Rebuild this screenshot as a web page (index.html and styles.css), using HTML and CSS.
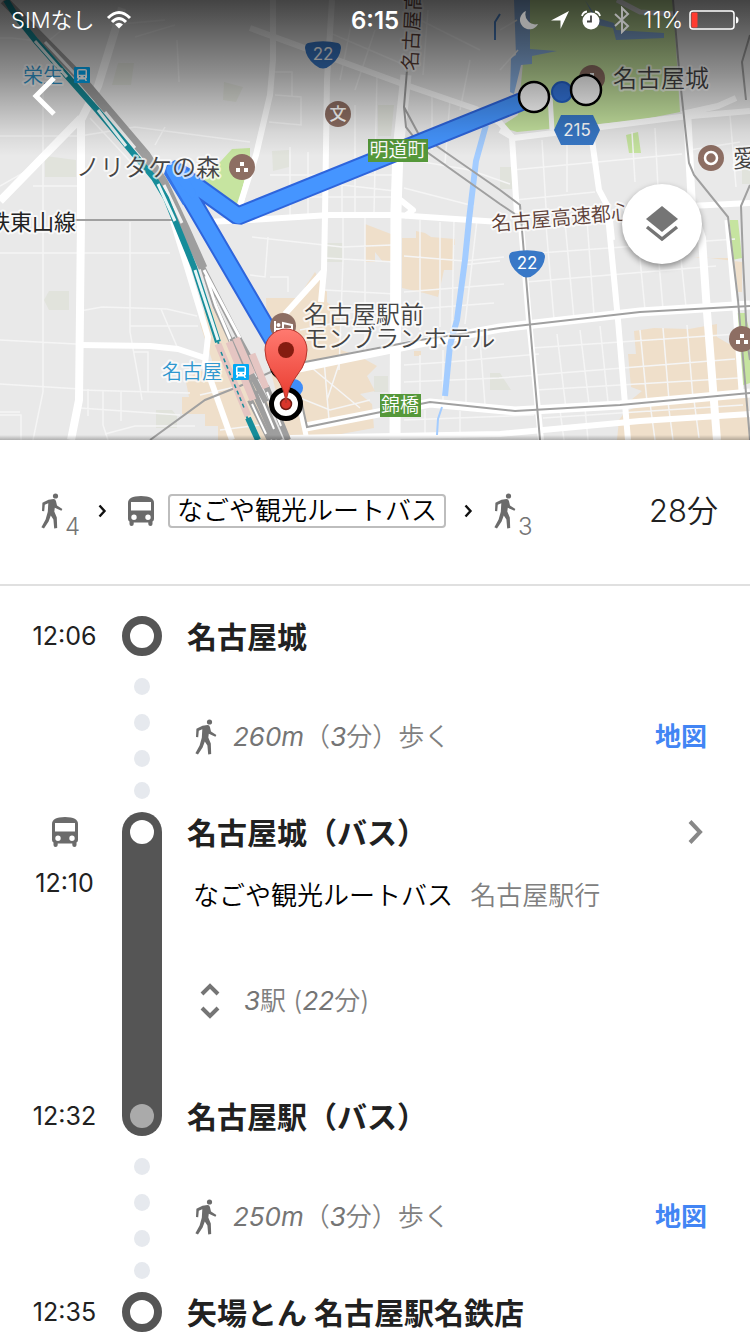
FILE: index.html
```
<!DOCTYPE html>
<html lang="ja">
<head>
  <meta charset="utf-8">
  <meta name="viewport" content="width=device-width, initial-scale=1.0">
  <title>名古屋城 - 矢場とん 名古屋駅名鉄店</title>
  <link rel="stylesheet" href="styles.css">
</head>
<body>
  <svg class="defs" width="0" height="0" aria-hidden="true">
    <symbol id="walk" viewBox="0 0 26 38">
      <circle cx="16.500" cy="4" r="2.600"/>
      <path d="M9.500 7.800 L14.500 7 Q16.600 7 17 9.200 L18 13.600 L23.400 17 L22.400 18.800 L15.800 15.800 L15.300 19.600 L17.800 25.400 L18.200 36 L15.200 36.400 L14.400 27.400 L11.800 23.600 L9.600 29.600 L5 36.600 L2.400 35.200 L6.600 27.600 L8.800 19.800 L9.300 11.200 L5.800 12.800 L5.200 19.200 L3 19 L3.400 10.800 Z"/>
    </symbol>
    <symbol id="bus" viewBox="0 0 30 32">
      <path fill-rule="evenodd" d="M2 8 Q2 1 15 1 Q28 1 28 8 V24 Q28 25.500 26.500 26.500 V29 Q26.500 31 24.500 31 Q22.300 31 22.300 29 V27.500 H7.700 V29 Q7.700 31 5.500 31 Q3.500 31 3.500 29 V26.500 Q2 25.500 2 24 Z M5 7 V15.500 H25 V7 Z M8 19.500 A2.700 2.700 0 1 0 8 24.900 A2.700 2.700 0 1 0 8 19.500 Z M22 19.500 A2.700 2.700 0 1 0 22 24.900 A2.700 2.700 0 1 0 22 19.500 Z"/>
    </symbol>
    <symbol id="next" viewBox="0 0 10 16">
      <path d="M1.500 2.500 L6.500 8 L1.500 13.500" fill="none" stroke="#111" stroke-width="2.400"/>
    </symbol>
    <symbol id="dots" viewBox="0 0 40 156">
      <g fill="#e6e9ee">
        <ellipse cx="20" cy="30.500" rx="8" ry="8.500"/>
        <ellipse cx="20" cy="66.500" rx="8" ry="8.500"/>
        <ellipse cx="20" cy="102.500" rx="8" ry="8.500"/>
        <ellipse cx="20" cy="134.500" rx="8" ry="8.500"/>
      </g>
    </symbol>
    <symbol id="station" viewBox="0 0 16 16">
      <rect width="16" height="16" rx="1" fill="#03a9f4"/>
      <path fill="#fff" fill-rule="evenodd" d="M3 3.500 Q3 2 5 2 H11 Q13 2 13 3.500 V10.500 Q13 11.500 12 11.500 L13 14 H11.500 L10.800 12.600 H5.200 L4.500 14 H3 L4 11.500 Q3 11.500 3 10.500 Z M4.500 3.600 V7.800 H11.500 V3.600 Z M5 9 V10.300 H6.400 V9 Z M9.600 9 V10.300 H11 V9 Z"/>
    </symbol>
    <symbol id="shield" viewBox="0 0 36 28">
      <path fill="#3878c7" d="M3 2 Q18 -1.500 33 2 Q36 3 36 7 Q35 17 26 24 Q18 31 10 24 Q1 17 0 7 Q0 3 3 2 Z"/>
    </symbol>
    <symbol id="sight" viewBox="0 0 26 26">
      <circle cx="13" cy="13" r="13" fill="#8d6e63"/>
      <path fill="#fff" d="M11 8h4v4h-4zM7 14h4v4H7zM15 14h4v4h-4z"/>
    </symbol>
  </svg>

  <header class="map">
    <svg class="map-canvas" viewBox="0 0 750 440" preserveAspectRatio="xMidYMid slice" role="img" aria-label="ルートの地図">
      <defs>
        <linearGradient id="shade" x1="0" y1="0" x2="0" y2="1">
          <stop offset="0" stop-color="#000" stop-opacity="0.710"/>
          <stop offset="0.470" stop-color="#000" stop-opacity="0.390"/>
          <stop offset="0.850" stop-color="#000" stop-opacity="0.080"/>
          <stop offset="1" stop-color="#000" stop-opacity="0"/>
        </linearGradient>
        <linearGradient id="pin" x1="0" y1="0" x2="0" y2="1">
          <stop offset="0" stop-color="#ff7a70"/>
          <stop offset="1" stop-color="#e8392d"/>
        </linearGradient>
      </defs>
      <rect width="750" height="440" fill="#e9e9e9"/>

      <!-- blocks -->
      <g fill="#e1e3dc">
        <path d="M118 63h16l-3 22h-19zM45 156l31 4v17H45zM224 82l19 5-7 15-13-2zM49 291h20v19H49l-5-10zM156 410h16l5 6v12h-21zM327 243h16v19h-16zM378 105h16l-3 31h-13zM272 151l17-1v17l-16 4zM374 376h14v16h-14zM490 373h10l11 17h-21zM500 167h12v22h-12zM742 168h8v16h-8z"/>
      </g>
      <g fill="#efdfca">
        <path d="M365 224l13 5 13 5v28h-8l-8-10v10h-10zM402 238h14v-7l9 2 6 4 24 2v6h-1v25h-10l-6 27-14-4-22-5zM414 351h7v5h-7z"/>
        <path d="M208 301l11 18 15 26 20 40 16 20-2 35h-50v-14h-13v-12h-23v-17h7l-3-15 12-12 12 4 2-14-12-36zM266 298h36l3-11 10-15 12 20v10l13 12 1 36 18 6 18 10-10 10 8 15-15 3 12 10 2 24-66 12h-20l-20-80z"/>
        <path d="M634 331l20-3 35 1 28-5v13l12 7 8-7 2 56-108 7 11-9-11-4-3-33h8zM625 412l13-6 110-11 2 45H617l2-20zM694 258l8-1 40 5v30h-4l-4-34z"/>
      </g>
      <g fill="#c6e4a0">
        <path d="M529 0h144l7 112-40 8-123 12-17-5 18-12zM232 149l18-1v20l-12 38-38-22zM626 135l12-3 3 21h-12zM729 220h9l4 38-10 2zM735 313h10l5 20v50l-9 3-4-36z"/>
      </g>
      <g fill="#8eb6e8">
        <path d="M514 0h16v49l27 2-25 5v8l-11 1-7 29-4-2 1-34 5-3zM585 0l12 18 17 5 2 7 48 3v5l-48 2-3-12-15-3z"/>
      </g>

      <!-- minor streets -->
      <g fill="none" stroke="#f5f5f5" stroke-width="1.500">
        <path d="M0 38h12l35 4 22-18M0 136h80M43 92v130M0 186l30-17 3-4M33 186h45M90 118l50 54M80 136l55-9 115 15M80 253h90M0 253h77M43 222v170l-10 48M130 222v110l10 55 2 13M80 311l22-4 65 2 30 7M130 326h68M161 309l17 40M133 352h15v40M80 390l110 3M80 408l100 7M0 340l76 4M0 384l80 5M21 440v-25H0M103 390v35l5 15M121 391v30M88 389v27M0 412h20M105 434l30-8h60M177 40l2 42M175 25l-40 12M165 127l-10 18M110 25l55-5"/>
        <path d="M275 95l26 2v28l-32-3M275 72h17v25M290 147v70M308 152v62M330 33l70 30M352 20l-12 60M375 30l-20 60M325 183l70 8M270 175h124M272 197h122M355 105v108M377 75l-3 138M342 183v31M252 237l90 10 50-2M343 215v45l-4 110M365 215v135M325 258l70 4M250 275l15 2 3-40M270 277h18v15M325 290l70 4M330 312h64M404 256l60 5 40-4M420 220v110M440 222v105M454 218l-2 110M477 220l-12 104M404 292l100-8M404 310l90-7M462 265l38-4"/>
        <path d="M404 365l45-3 90-8M404 382l95-4 39-3M420 355v48M443 350v50M466 346v60M480 340l5 65M404 420l130-5M425 410v28M460 411v27M400 158l70 12 40 14M432 95v55M450 100l-5 63M404 188l70 18M420 20l60 30M470 60l-10 50M428 10l-5 65M300 358l60 50M280 390l50 20 40-10M324 360l5 60M342 355l-15 45M300 330l60-12M190 370l30-4M200 395l35-8M220 430l40-5"/>
        <path d="M542 140l4 68M567 137v55M632 132l3 50M655 128l3 60M730 115l6 72M512 170l170-16M515 200l80-8M690 150l50-8M525 254l210-15M526 282l190-16M546 225l8 95M565 222l9 97M587 220l7 95M636 218l9 92M659 263l4 46M681 259l5 48M532 348l205-14M535 375l200-16M536 390l202-12M557 334l9 75M580 330l9 74M600 326l8 76M640 330l7 72M663 328l6 72M687 325l6 74M543 418l200-13M560 410l4 30M585 408l3 32M650 403l5 37M668 402l5 38M694 400l5 38M500 70l18-20M500 30l17-10"/>
      </g>

      <!-- main roads -->
      <g fill="none" stroke="#fff" stroke-linejoin="round">
        <path d="M122 8L98 86 81 120v100l-2 180-8 40M81 118L0 201" stroke-width="8"/>
        <path d="M80 345l70 1 28 3 27 9M172 218l28 92 8 27-3 27 27 76" stroke-width="6"/>
        <path d="M273 0v60l-3 35-14 60-18 56M332 0l-5 80-2 135-1 55-3 32M323 272l-38 42M250 28l150 55 76 26 24 14 13 15" stroke-width="6"/>
        <path d="M406 75l-8 75-2 60-1 230" stroke-width="11"/>
        <path d="M205 222l45-2 80-5h66l104 7M404 217l9-7-15-12M690 206l60-3M736 98l-18 8-36 8" stroke-width="6"/>
        <path d="M284 371l136-28 80-15 140-16 110-7M306 427l124-24 85 8 105-6 130-12" stroke-width="9"/>
        <path d="M290 438l210-4 140-13 110-7" stroke-width="6"/>
        <path d="M500 130l14 8 166-21 70-6M512 138l5 75M521 225l8 95 12 120M592 140l7 50 8 15 11 115 10 120M610 220l2 20" stroke-width="6"/>
        <path d="M687 110l5 98 10 30 5 74 10 128" stroke-width="8"/>
        <path d="M727 220l8 90 6 80M550 95l2 35M617 0l23 12 35 2M295 385l12 55M250 168l-12 48" stroke-width="5"/>
      </g>
      <g fill="none" stroke="#a3ccff">
        <path d="M486 125l-10 36-7 59-4 40-8 60-7 25-5 51" stroke-width="6"/>
        <path d="M442 407l-4 12-1 16" stroke-width="2"/>
      </g>
      <path d="M495 40v-18l5-8" fill="none" stroke="#4d86cc" stroke-width="2"/>
      <g fill="none" stroke="#a0a0a0" stroke-width="2">
        <path d="M407 70l-3 37 2 20 18 23 76 54 15 10M404 107l14 26 20 14 62 43 20 15 2 25 8 95 10 115"/>
        <path d="M673 0l7 80 9 83 5 12 34 42 10 83 12 140M750 35l-8 27 4 38M750 185l-9 21 2 54 4 80 3 20"/>
        <path d="M150 440l55-40 35-14 44-20 136-26 80-12 140-16 110-6M300 395l7 32 123-25 85 9 105-6 130-12"/>
        <path d="M72 220h100"/>
      </g>

      <!-- railway -->
      <g fill="none">
        <path d="M4 0l74 75 68 80 18 28 21 45 18 40" stroke="#9e9e9e" stroke-width="9"/>
        <path d="M45 42l30 32M105 112l30 36M164 185l18 38" stroke="#f0f0f0" stroke-width="3"/>
        <path d="M202 266l38 74 24 44M203 268l12 38 20 44 40 90" stroke="#9e9e9e" stroke-width="5"/>
        <path d="M204 270l36 68M206 276l10 30 17 40" stroke="#fff" stroke-width="3"/>
        <path d="M6 0l10 16 20 25 62 70 56 67 12 20 10 25 18 44 24 75" stroke="#168d9a" stroke-width="6"/>
        <path d="M35 41l32 36M98 110l28 36M158 184l17 37M195 270l23 70" stroke="#e8f6f6" stroke-width="3"/>
        <path d="M218 342l30 78" stroke="#168d9a" stroke-width="2"/>
        <path d="M248 418l10 22" stroke="#168d9a" stroke-width="6"/>
        <path d="M250 400l20 40M258 390l22 50M266 386l22 54" stroke="#9e9e9e" stroke-width="6"/>
        <path d="M252 404l14 30M259 393l15 36M267 392l14 34" stroke="#fff" stroke-width="2"/>
        <path d="M232 338l34 64" stroke="#9e9e9e" stroke-width="6"/>
        <path d="M218 344l30 72M229 342l24 58M236 338l16 36M252 354l14 34" stroke="#e5c5c2" stroke-width="7"/>
        <path d="M221 352l24 58" stroke="#168d9a" stroke-width="1.500" stroke-dasharray="4 3"/>
      </g>

      <!-- route -->
      <path d="M533 97L238 216 174 170 285 360" fill="none" stroke="#2e65dc" stroke-width="19" stroke-linejoin="bevel"/>
      <path d="M164 174l3-9 8-5 16 9 8 34-16 2z" fill="#3474e8"/>
      <path d="M533 97L238 216 174 170 285 360" fill="none" stroke="#4595ff" stroke-width="15" stroke-linejoin="round"/>
      <path d="M168 170l14-2 14 24-3 8z" fill="#4595ff"/>
      <circle cx="294" cy="388" r="9" fill="#3f8df9"/>
      <circle cx="562" cy="92" r="10" fill="#3577e0" stroke="#2461c9" stroke-width="2"/>

      <!-- places -->
      <g class="label">
        <text class="station-name" x="23" y="83">栄生</text>
        <text class="station-name" x="162" y="379">名古屋</text>
        <text class="place" x="76" y="176">ノリタケの森</text>
        <text class="place" x="613" y="87">名古屋城</text>
        <text class="place" x="733" y="167">愛</text>
        <text class="place" x="304" y="323">名古屋駅前</text>
        <text class="place" x="304" y="347">モンブランホテル</text>
        <text class="line-name" x="-12" y="230">鉄東山線</text>
        <text class="road-name" transform="translate(492 231) rotate(-5)">名古屋高速都心</text>
        <text class="road-name" transform="translate(417 71) rotate(-87)">名古屋高速</text>
      </g>
      <use href="#station" x="74" y="67" width="16" height="16"/>
      <use href="#station" x="233" y="364" width="16" height="16"/>
      <use href="#sight" x="229" y="154" width="26" height="26"/>
      <use href="#sight" x="579" y="65" width="26" height="26"/>
      <use href="#sight" x="729" y="326" width="26" height="26"/>
      <circle cx="711" cy="158" r="13" fill="#8d6e63"/>
      <circle cx="711" cy="158" r="6" fill="none" stroke="#fff" stroke-width="2.500"/>
      <circle cx="338" cy="114" r="13" fill="#8d6e63"/>
      <text class="school" x="338" y="120">文</text>
      <circle cx="283" cy="326" r="13" fill="#8d6e63"/>
      <path d="M275 321v11M275 329h17v3M292 329v-4l-9-2v5" fill="none" stroke="#fff" stroke-width="2"/>
      <circle cx="278.500" cy="325" r="2" fill="#fff"/>
      <rect x="368" y="139" width="60" height="23" fill="#55983a"/>
      <text class="junction" x="398" y="157">明道町</text>
      <rect x="380" y="394" width="41" height="23" fill="#55983a"/>
      <text class="junction" x="400" y="412">錦橋</text>
      <use href="#shield" x="305" y="41" width="36" height="28"/>
      <text class="route-no" x="323" y="60">22</text>
      <use href="#shield" x="509" y="250" width="36" height="28"/>
      <text class="route-no" x="527" y="269">22</text>
      <path fill="#3878c7" d="M561 115h32l7 15-7 15h-32l-7-15z"/>
      <text class="route-no" x="577" y="136">215</text>

      <g fill="#fff" stroke="#000">
        <circle cx="534" cy="97" r="15" stroke-width="2.500"/>
        <circle cx="586" cy="90" r="15" stroke-width="2.500"/>
        <circle cx="285" cy="365" r="14" stroke-width="3"/>
        <circle cx="286" cy="404" r="14.500" stroke-width="5"/>
      </g>
      <circle cx="286" cy="404" r="5.500" fill="#d9362b" stroke="#701b14" stroke-width="1.500"/>
      <path d="M286 403 C284 386 278 380 270 368 Q265 359 265 350 A21 21 0 0 1 307 350 Q307 359 302 368 C294 380 288 386 286 403 Z" fill="url(#pin)" stroke="#b5352c" stroke-width="1"/>
      <circle cx="286" cy="350" r="8" fill="#841c10"/>
      <rect width="750" height="156" fill="url(#shade)"/>
    </svg>

    <div class="status">
      <div class="carrier">
        <span>SIMなし</span>
        <svg width="26" height="20" viewBox="0 0 26 20">
          <g fill="none" stroke="#fff" stroke-width="3">
            <path d="M2 8 Q13 -3 24 8"/>
            <path d="M6 12 Q13 5 20 12"/>
          </g>
          <path d="M9 14.500 Q13 11 17 14.500 L13 18.500 Z" fill="#fff"/>
        </svg>
      </div>
      <div class="clock">6:15</div>
      <div class="indicators">
        <svg width="20" height="20" viewBox="0 0 20 20"><path d="M7 1 A9.500 9.500 0 1 0 19 14 A10 10 0 0 1 7 1 Z" fill="#a0a0a0"/></svg>
        <svg width="18" height="20" viewBox="0 0 18 20"><path d="M18 1 L9.500 19 V10.500 H0 Z" fill="#fff"/></svg>
        <svg width="20" height="20" viewBox="0 0 20 20">
          <circle cx="10" cy="11" r="8.500" fill="#fff"/>
          <path d="M1 6 Q2 2 6 1.500 M19 6 Q18 2 14 1.500" fill="none" stroke="#fff" stroke-width="1.800"/>
          <path d="M10 5.500 V11.500 H6" fill="none" stroke="#444" stroke-width="1.800"/>
        </svg>
        <svg width="18" height="28" viewBox="0 0 18 28"><path d="M2 8 L15 20 L9 26 V2 L15 8 L2 20" fill="none" stroke="#a8a8a8" stroke-width="2"/></svg>
        <span class="percent">11%</span>
        <svg width="50" height="20" viewBox="0 0 50 20">
          <rect x="1" y="1" width="44" height="18" rx="3" fill="none" stroke="#fff" stroke-width="1.500"/>
          <rect x="2.500" y="2.500" width="6" height="15" rx="1" fill="#ff3b30"/>
          <path d="M47 6.500 Q49.500 7 49.500 10 Q49.500 13 47 13.500 Z" fill="#fff"/>
        </svg>
      </div>
    </div>
    <button class="back" type="button" aria-label="戻る">
      <svg width="26" height="40" viewBox="0 0 26 40"><path d="M23 2 L5 20 L23 38" fill="none" stroke="#fff" stroke-width="5"/></svg>
    </button>
    <button class="layers" type="button" aria-label="レイヤ">
      <svg width="34" height="36" viewBox="0 0 34 36">
        <path d="M17 0 L33 13 L17 26 L1 13 Z" fill="#757575"/>
        <path d="M2 21 L17 33 L32 21" fill="none" stroke="#757575" stroke-width="3.500"/>
      </svg>
    </button>
  </header>

  <section class="summary">
    <div class="walk"><svg width="26" height="38"><use href="#walk"/></svg><span>4</span></div>
    <svg width="10" height="16"><use href="#next"/></svg>
    <div class="ride"><svg width="30" height="32"><use href="#bus"/></svg><span class="badge">なごや観光ルートバス</span></div>
    <svg width="10" height="16"><use href="#next"/></svg>
    <div class="walk"><svg width="26" height="38"><use href="#walk"/></svg><span>3</span></div>
    <div class="total">28分</div>
  </section>

  <main class="steps">
    <div class="step">
      <time class="time">12:06</time>
      <div class="ring"></div>
      <h2 class="stop">名古屋城</h2>
    </div>

    <div class="step">
      <svg class="dots" width="40" height="156"><use href="#dots"/></svg>
      <div class="walking">
        <svg width="26" height="38"><use href="#walk"/></svg>
        <span class="note"><i>260m</i>（<i>3</i>分）歩く</span>
        <a class="map-link" href="#">地図</a>
      </div>
    </div>

    <div class="step">
      <div class="times">
        <svg width="30" height="32"><use href="#bus"/></svg>
        <time class="time">12:10</time>
        <time class="time arrive">12:32</time>
      </div>
      <div class="rail"><span class="dot"></span><span class="dot end"></span></div>
      <div class="leg">
        <div class="leg-head">
          <h2 class="stop">名古屋城（バス）</h2>
          <svg width="16" height="26" viewBox="0 0 16 26"><path d="M2 2.500 L12 13 L2 23.500" fill="none" stroke="#888" stroke-width="4"/></svg>
        </div>
        <p class="line-info">なごや観光ルートバス <span>名古屋駅行</span></p>
        <button class="stops" type="button">
          <svg width="20" height="38" viewBox="0 0 20 38"><path d="M2 12 L10 4 L18 12 M2 26 L10 34 L18 26" fill="none" stroke="#757575" stroke-width="4"/></svg>
          <span class="note"><i>3</i>駅 (<i>22</i>分)</span>
        </button>
        <h2 class="stop last">名古屋駅（バス）</h2>
      </div>
    </div>

    <div class="step">
      <svg class="dots" width="40" height="156"><use href="#dots"/></svg>
      <div class="walking">
        <svg width="26" height="38"><use href="#walk"/></svg>
        <span class="note"><i>250m</i>（<i>3</i>分）歩く</span>
        <a class="map-link" href="#">地図</a>
      </div>
    </div>

    <div class="step">
      <time class="time">12:35</time>
      <div class="ring"></div>
      <h2 class="stop">矢場とん 名古屋駅名鉄店</h2>
    </div>
  </main>
</body>
</html>
```
FILE: styles.css
```
* {
  box-sizing: border-box;
}
body {
  margin: 0;
  background: #fff;
  color: #212121;
  font-family: Inter, "Noto Sans CJK JP", sans-serif;
  font-size: 26px;
}
svg {
  display: block;
  flex: none;
}
button {
  padding: 0;
  border: 0;
  background: none;
  color: inherit;
  font: inherit;
}
.defs {
  position: absolute;
}

/* map */
.map {
  position: relative;
  height: 440px;
  overflow: hidden;
}
.map-canvas {
  width: 100%;
  height: 100%;
}
.map::after {
  content: "";
  position: absolute;
  left: 0;
  right: 0;
  bottom: 0;
  height: 5px;
  background: linear-gradient(rgba(0, 0, 0, 0), rgba(0, 0, 0, 0.25));
}
.label text {
  paint-order: stroke;
  stroke: rgba(255, 255, 255, 0.7);
  stroke-width: 4px;
  stroke-linejoin: round;
}
.place {
  font-size: 24px;
  font-weight: 350;
  fill: #444;
}
.station-name {
  font-size: 20px;
  font-weight: 350;
  fill: #2f97cf;
}
.line-name {
  font-size: 22px;
  fill: #222;
}
.road-name {
  font-size: 20px;
  font-weight: 350;
  fill: #5d4037;
}
.junction {
  font-size: 19px;
  font-weight: 350;
  fill: #fff;
  text-anchor: middle;
}
.school {
  font-size: 17px;
  font-weight: 500;
  fill: #fff;
  text-anchor: middle;
}
.route-no {
  font-size: 17px;
  fill: #fff;
  text-anchor: middle;
}
.status {
  position: absolute;
  top: 0;
  left: 0;
  right: 0;
  display: grid;
  grid-template-columns: 1fr auto 1fr;
  align-items: center;
  height: 40px;
  padding: 0 11px;
  color: #fff;
  font-size: 22px;
}
.carrier {
  display: flex;
  align-items: center;
  gap: 12px;
  font-weight: 350;
  line-height: 40px;
}
.clock {
  font-size: 24px;
  font-weight: 600;
}
.indicators {
  display: flex;
  justify-content: flex-end;
  align-items: center;
  gap: 12px;
}
.percent {
  margin-right: -6px;
  font-size: 23px;
  font-weight: 350;
}
.back {
  position: absolute;
  top: 76px;
  left: 31px;
}
.layers {
  position: absolute;
  top: 184px;
  right: 48px;
  display: flex;
  align-items: center;
  justify-content: center;
  width: 80px;
  height: 80px;
  border-radius: 50%;
  background: #fff;
  box-shadow: 0 3px 6px rgba(0, 0, 0, 0.4);
}

/* summary */
.summary {
  display: flex;
  align-items: center;
  gap: 18px;
  height: 146px;
  padding: 0 32px 2px 39px;
  border-bottom: 2px solid #e0e0e0;
  fill: #6b6b6b;
}
.walk {
  display: flex;
  align-items: flex-end;
  color: #757575;
  font-size: 24px;
  font-weight: 350;
  line-height: 18px;
}
.walk span {
  margin-bottom: -6px;
}
.ride {
  display: flex;
  align-items: center;
  gap: 12px;
}
.badge {
  padding: 0 7px;
  border: 2px solid #bdbdbd;
  border-radius: 4px;
  color: #000;
  font-weight: 350;
  line-height: 30px;
}
.total {
  margin-left: auto;
  font-size: 31px;
  font-weight: 350;
  line-height: 40px;
}

/* steps */
.steps {
  padding-top: 30px;
  fill: #6b6b6b;
}
.step {
  display: grid;
  grid-template-columns: 122px 40px 1fr;
}
.time {
  padding-left: 7px;
  font-size: 25px;
  line-height: 40px;
  text-align: center;
}
.ring {
  width: 40px;
  height: 40px;
  border: 8px solid #555;
  border-radius: 50%;
}
.stop {
  margin: 0;
  padding-left: 25px;
  font-size: 30px;
  font-weight: 700;
  line-height: 42px;
  height: 40px;
}
.dots {
  grid-column: 2;
}
.walking {
  display: flex;
  align-items: center;
  gap: 14px;
  padding: 6px 43px 0 31px;
  line-height: 40px;
}
.note {
  color: #808080;
  font-weight: 350;
}
.note i {
  color: #757575;
  font-weight: 400;
}
.map-link {
  margin-left: auto;
  color: #4285f4;
  font-weight: 700;
  text-decoration: none;
}
.times {
  display: flex;
  flex-direction: column;
}
.times svg {
  margin: 4px auto 15px 50px;
}
.arrive {
  margin-top: auto;
}
.rail {
  display: flex;
  flex-direction: column;
  justify-content: space-between;
  padding: 8px;
  border-radius: 20px;
  background: #555;
}
.dot {
  width: 24px;
  height: 24px;
  border-radius: 50%;
  background: #fff;
}
.end {
  background: #aaa;
}
.leg-head {
  display: flex;
  align-items: center;
  justify-content: space-between;
  padding-right: 46px;
}
.line-info {
  margin: 24px 0 65px;
  padding-left: 31px;
  color: #000;
  font-weight: 350;
  line-height: 40px;
}
.line-info span {
  margin-left: 10px;
  color: #808080;
}
.stops {
  display: flex;
  align-items: center;
  gap: 24px;
  padding-left: 38px;
  line-height: 40px;
}
.last {
  margin-top: 75px;
}
```
